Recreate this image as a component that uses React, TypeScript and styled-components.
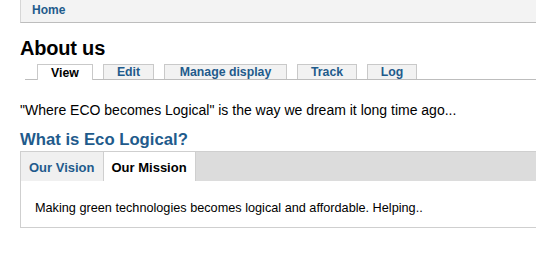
import React, {useState} from "react";
import styled, {createGlobalStyle} from "styled-components";

const GlobalStyle = createGlobalStyle`
  html, body {
    margin: 0;
    padding: 0;
    background: #fff;
    font-family: "Liberation Sans", Arial, Helvetica, sans-serif;
    color: #000;
    overflow: hidden;
  }
`

const Page = styled.div`
  padding-left: 20px;
  width: 536px;
  box-sizing: border-box;
`

const Breadcrumb = styled.div`
  height: 23px;
  box-sizing: border-box;
  background: #f3f3f3;
  border-left: 1px solid #d6d6d6;
  border-bottom: 1px solid #bdbdbd;
  padding: 3px 0 0 11px;
  font-size: 12px;
  font-weight: bold;
  color: #1f5b8c;
  margin-right: -4px;
`

const Title = styled.h1`
  margin: 14px 0 0 0;
  font-size: 20px;
  line-height: 22px;
  font-weight: bold;
  letter-spacing: -0.2px;
`

const PrimaryTabs = styled.ul`
  list-style: none;
  display: flex;
  gap: 10px;
  margin: 4px 0 0 5px;
  padding: 0 0 0 12px;
  border-bottom: 1px solid #bdbdbd;
  height: 16px;
`

const PrimaryTab = styled.li<{ $active?: boolean }>`
  height: ${props => props.$active ? '16px' : '15px'};
  box-sizing: border-box;
  border: 1px solid #c9c9c9;
  border-bottom: none;
  background: ${props => props.$active ? '#fff' : '#f2f2f2'};
  color: ${props => props.$active ? '#000' : '#1f5b8c'};
  font-size: 12.3px;
  font-weight: bold;
  line-height: 14px;
  text-align: center;
  align-self: flex-end;
  margin-bottom: ${props => props.$active ? '-1px' : '0'};
  padding-top: ${props => props.$active ? '1px' : '0'};
`

const Intro = styled.p`
  margin: 22px 0 0 0;
  font-size: 14px;
  line-height: 16px;
`

const Subtitle = styled.h2`
  margin: 12px 0 0 0;
  font-size: 16.7px;
  line-height: 19px;
  font-weight: bold;
  color: #1f5b8c;
`

const TabsBox = styled.div`
  border: 1px solid #cfcfcf;
  border-right: none;
  margin-top: 2px;
  margin-right: -4px;
`

const TabStrip = styled.div`
  display: flex;
  height: 29px;
  background: #dcdcdc;
`

const SecondaryTab = styled.div<{ $active?: boolean }>`
  height: 29px;
  box-sizing: border-box;
  padding: 8px 8px 0 8px;
  font-size: 13px;
  font-weight: bold;
  color: ${props => props.$active ? '#000' : '#1f5b8c'};
  background: ${props => props.$active ? '#fff' : '#f0f0f0'};
  border-right: 1px solid #cfcfcf;
  cursor: pointer;
`

const Panel = styled.div`
  height: 46px;
  box-sizing: border-box;
  padding: 19px 0 0 14px;
  font-size: 12.7px;
  line-height: 16px;
`

const primaryTabs = [
  {label: 'View', width: 56},
  {label: 'Edit', width: 51},
  {label: 'Manage display', width: 123},
  {label: 'Track', width: 60},
  {label: 'Log', width: 50},
]

const App: React.FC = () => {
  const [active, setActive] = useState(1)
  const panes = [
    'Where ECO becomes Logical is our vision.',
    'Making green technologies becomes logical and affordable. Helping..',
  ]

  return (
    <Page>
      <GlobalStyle/>
      <Breadcrumb>Home</Breadcrumb>
      <Title>About us</Title>
      <PrimaryTabs>
        {primaryTabs.map((t, i) => (
          <PrimaryTab key={t.label} $active={i === 0} style={{width: t.width}}>
            {t.label}
          </PrimaryTab>
        ))}
      </PrimaryTabs>
      <Intro>"Where ECO becomes Logical" is the way we dream it long time ago...</Intro>
      <Subtitle>What is Eco Logical?</Subtitle>
      <TabsBox>
        <TabStrip>
          <SecondaryTab $active={active === 0} onClick={() => setActive(0)}>Our Vision</SecondaryTab>
          <SecondaryTab $active={active === 1} onClick={() => setActive(1)}>Our Mission</SecondaryTab>
        </TabStrip>
        <Panel>{panes[active]}</Panel>
      </TabsBox>
    </Page>
  )
}

export default App
